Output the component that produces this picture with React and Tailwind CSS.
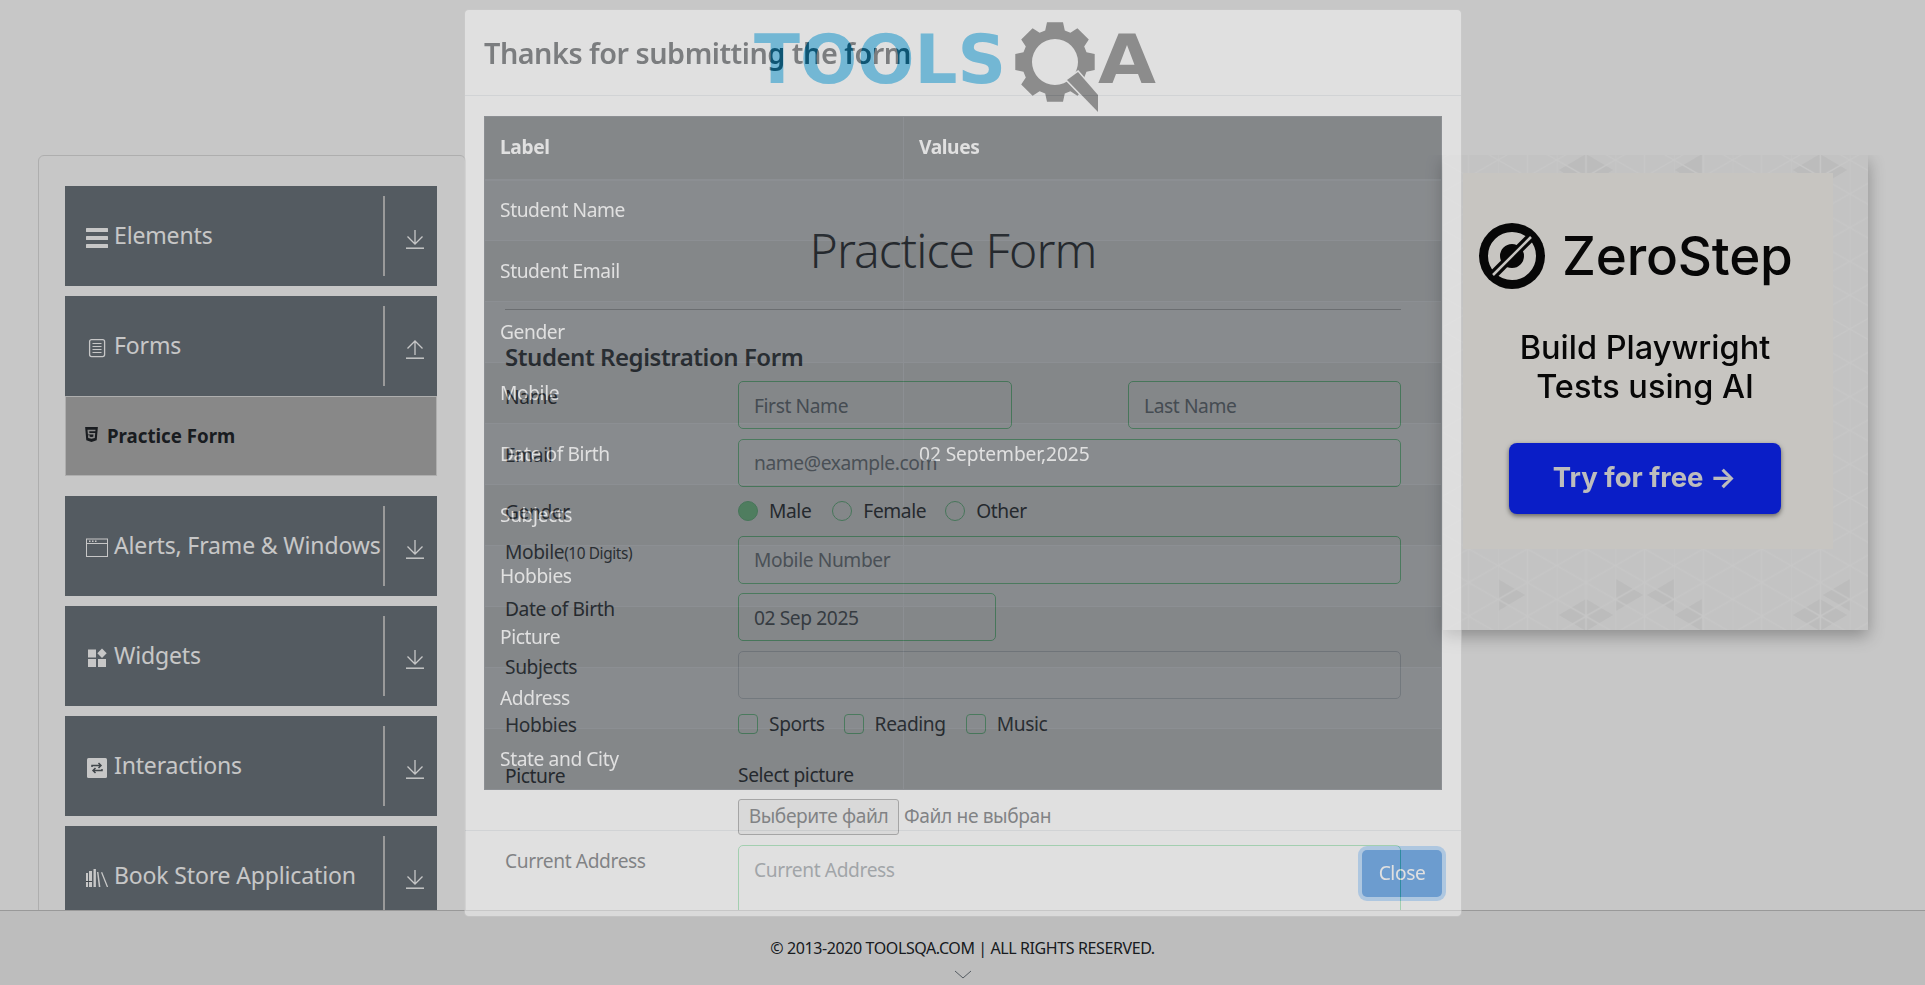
import { FaHtml5 } from "react-icons/fa";

// ---------------------------- Small drawings ----------------------------
const MenuBars = () => (
    <svg width="22" height="20" viewBox="0 0 22 20" fill="currentColor">
        <rect x="0" y="0" width="22" height="4" rx="0.5" />
        <rect x="0" y="8" width="22" height="4" rx="0.5" />
        <rect x="0" y="16" width="22" height="4" rx="0.5" />
    </svg>
);

const DocIcon = () => (
    <svg width="22" height="20" viewBox="0 0 22 20" fill="none" stroke="currentColor" strokeWidth="1.3">
        <rect x="3.6" y="1.6" width="15" height="17" rx="2" />
        <path d="M6.5 5.5h9M6.5 8.5h9M6.5 11.5h9M6.5 14.5h9" strokeWidth="1" />
    </svg>
);

const WindowIcon = () => (
    <svg width="22" height="20" viewBox="0 0 22 20" fill="none" stroke="currentColor" strokeWidth="1">
        <rect x="0.5" y="1" width="21" height="17.5" />
        <path d="M0.5 5.5h21" />
        <path d="M3 3.2h1.5M6 3.2h1.5M9 3.2h1.5" strokeWidth="1.5" />
    </svg>
);

const WidgetIcon = () => (
    <svg width="22" height="20" viewBox="0 0 22 20" fill="currentColor">
        <rect x="2" y="1.5" width="8" height="8" />
        <rect x="2" y="11" width="8" height="8" />
        <rect x="12" y="11" width="8" height="8" />
        <path d="M16 0.5l4.7 4.7-4.7 4.7-4.7-4.7z" />
    </svg>
);

const SwapIcon = () => (
    <svg width="22" height="20" viewBox="0 0 22 20">
        <rect x="1" y="0" width="20" height="20" rx="1.5" fill="currentColor" />
        <path
            d="M6 9V7.5h8.5M12.5 5l2.5 2.5-2.5 2.5M16 11v1.5H7.5M9.5 10L7 12.5 9.5 15"
            fill="none"
            stroke="#545b61"
            strokeWidth="1.5"
        />
    </svg>
);

const BooksIcon = () => (
    <svg width="22" height="20" viewBox="0 0 22 20" fill="currentColor">
        <rect x="0" y="5" width="2" height="14" />
        <rect x="3" y="3" width="3" height="16" />
        <rect x="7.5" y="1" width="2.4" height="18" />
        <path d="M11 4h1.4l2 15h-1.6zM15 4.5l1.2-.4 6 15h-1.4z" />
        <rect x="0" y="13" width="6" height="1" fill="#545b61" />
    </svg>
);

const ArrowIcon = ({ up }) => (
    <svg width="18" height="19" viewBox="0 0 18 19" fill="none" stroke="currentColor" strokeWidth="1.3">
        <path d="M0 18.2h18" strokeWidth="1.5" />
        {up ? <path d="M9 15V1M1.5 8.5L9 1l7.5 7.5" /> : <path d="M9 0v14M1.5 6.5L9 14l7.5-7.5" />}
    </svg>
);

// Gear of the logo, teeth computed around the centre
const gearPath = () => {
    const cx = 301;
    const cy = 45;
    const pts = [];
    for (let i = 0; i < 8; i++) {
        const a = (i * Math.PI) / 4 - Math.PI / 2;
        const step = 0.2;
        [
            [33, a - 0.3],
            [40.5, a - step],
            [40.5, a + step],
            [33, a + 0.3],
        ].forEach(([r, t]) => pts.push(`${(cx + r * Math.cos(t)).toFixed(1)} ${(cy + r * Math.sin(t)).toFixed(1)}`));
    }
    return `M${pts.join("L")}Z M${cx - 23} ${cy}a23 23 0 1 0 46 0a23 23 0 1 0-46 0Z`;
};

const Logo = () => (
    <svg width="404" height="100" viewBox="0 0 404 100" className="ml-[754px] mt-[17px] blur-[0.5px]">
        <text
            x="0"
            y="66"
            fontFamily="'DejaVu Sans', sans-serif"
            fontWeight="700"
            fontSize="68"
            textLength="252"
            lengthAdjust="spacingAndGlyphs"
            fill="#00a0e4"
        >
            TOOLS
        </text>
        <path d={gearPath()} fill="#3b3b3b" fillRule="evenodd" />
        <path d="M313 63L324 55L344 78L344 95Z" fill="#3b3b3b" stroke="#ffffff" strokeWidth="3" paintOrder="stroke" />
        <text
            x="344"
            y="66"
            fontFamily="'DejaVu Sans', sans-serif"
            fontWeight="700"
            fontSize="68"
            textLength="58"
            lengthAdjust="spacingAndGlyphs"
            fill="#3b3b3b"
        >
            A
        </text>
    </svg>
);

// Darker triangles of the ad's background, base x and centre y in ad coordinates
const adTriangles = [
    [143, 15, -1], [143, 15, 1], [259, 15, -1], [377, 15, -1], [377, 15, 1],
    [143, 460, -1], [143, 460, 1], [259, 460, -1], [377, 460, -1], [377, 460, 1],
    [173, 440, 1], [231, 440, -1], [55, 440, 1], [407, 440, -1],
];

const AdBackground = () => (
    <svg className="absolute inset-0" width="425" height="475">
        <defs>
            <pattern id="tri" x="-3.5" y="5" width="58.6" height="33.8" patternUnits="userSpaceOnUse">
                <path d="M0 0V33.8M29.3 0V33.8M0 0L29.3 16.9L58.6 0M0 33.8L29.3 16.9L58.6 33.8" fill="none" stroke="#ffffff" strokeWidth="1.5" />
            </pattern>
        </defs>
        <rect width="425" height="475" fill="#fafafa" />
        {adTriangles.map(([x, y, dir], i) => (
            <polygon key={i} points={`${x},${y - 16} ${x},${y + 16} ${x + dir * 27},${y}`} fill="#f1f1f1" />
        ))}
        <rect width="425" height="475" fill="url(#tri)" />
    </svg>
);

const ZeroStepMark = () => (
    <svg width="66" height="66" viewBox="0 0 66 66">
        <circle cx="33" cy="33" r="33" fill="#0a0a0a" />
        <circle cx="33" cy="33" r="18" fill="none" stroke="#fffdf8" strokeWidth="12" />
        <path d="M14 52L52 14" stroke="#0a0a0a" strokeWidth="9" />
        <path d="M14 52L52 14" stroke="#fffdf8" strokeWidth="2.5" />
    </svg>
);

// ---------------------------- Sidebar ----------------------------
const SideGroup = ({ icon, label, up, mb = "mb-[10px]" }) => (
    <div className={`flex h-[100px] items-center bg-[#6c757d] text-white ${mb}`}>
        <div className="flex min-w-0 flex-1 items-center pl-[21px]">
            <span className="mt-[4px] w-[22px] shrink-0">{icon}</span>
            <span className="mb-[2px] ml-[6px] whitespace-nowrap text-[23px] tracking-[-0.15px]">{label}</span>
        </div>
        <div className="h-[80px] w-[2px] bg-[#c6c6c6]"></div>
        <div className="flex w-[52px] justify-center pt-[7px] pl-[8px]">
            <ArrowIcon up={up} />
        </div>
    </div>
);

const Sidebar = () => (
    <div className="ml-[38px] h-[900px] w-[428px] shrink-0 rounded-md border border-[#dfdfdf] pt-[30px] pr-[28px] pl-[26px]">
        <SideGroup icon={<MenuBars />} label="Elements" />
        <SideGroup icon={<DocIcon />} label="Forms" up mb="mb-0" />
        <div className="mb-[20px] flex h-[80px] items-center border border-[#dfdfdf] bg-[#afafaf] pl-[18px] text-[#212529]">
            <FaHtml5 className="mb-[3px] h-[17px] w-[15px]" />
            <span className="ml-[8px] text-[18.7px] font-bold">Practice Form</span>
        </div>
        <SideGroup icon={<WindowIcon />} label="Alerts, Frame & Windows" />
        <SideGroup icon={<WidgetIcon />} label="Widgets" />
        <SideGroup icon={<SwapIcon />} label="Interactions" />
        <SideGroup icon={<BooksIcon />} label="Book Store Application" />
    </div>
);

// ---------------------------- Form ----------------------------
const inputCls =
    "h-[48px] rounded-[5px] border border-[#70d890] bg-transparent px-[15px] text-[19.2px] tracking-[-0.4px] text-[#495057] placeholder:text-[#6c757d]";

const FormRow = ({ label, hint, children, cls = "h-[48px] mb-[9.6px]" }) => (
    <div className={`flex items-start ${cls}`}>
        <label className="mt-[1px] w-[233px] shrink-0 whitespace-nowrap leading-[30px]">
            {label}
            {hint && <small className="text-[15.4px]">{hint}</small>}
        </label>
        {children}
    </div>
);

const Choice = ({ type, label, cls, checked }) => (
    <label className={`flex items-center ${cls}`}>
        <input
            type={type}
            defaultChecked={checked}
            className={`h-[20px] w-[20px] appearance-none border border-[#70d890] bg-transparent checked:bg-[#84e89b] ${
                type === "radio" ? "rounded-full" : "rounded-[4px]"
            }`}
        />
        <span className="ml-[11px] leading-[30px]">{label}</span>
    </label>
);

const PracticeForm = () => (
    <div className="ml-[39px] w-[896px] shrink-0 text-[19.2px] tracking-[-0.4px] text-[#212529]">
        <h1 className="mt-[66px] text-center text-[48px] font-light leading-[58px] tracking-[-0.9px]">Practice Form</h1>
        <hr className="mt-[30px] border-[#bcbcbc]" />
        <h5 className="mt-[32px] mb-[10px] text-[24px] font-semibold leading-[29px] tracking-[-0.45px]">Student Registration Form</h5>

        <FormRow label="Name">
            <input readOnly placeholder="First Name" className={`${inputCls} w-[274px]`} />
            <input readOnly placeholder="Last Name" className={`${inputCls} ml-[116px] w-[273px]`} />
        </FormRow>
        <FormRow label="Email">
            <input readOnly placeholder="name@example.com" className={`${inputCls} w-[663px]`} />
        </FormRow>
        <FormRow label="Gender" cls="h-[30px] mb-[9.6px]">
            <Choice type="radio" label="Male" checked />
            <Choice type="radio" label="Female" cls="ml-[21px]" />
            <Choice type="radio" label="Other" cls="ml-[19px]" />
        </FormRow>
        <FormRow label="Mobile" hint="(10 Digits)">
            <input readOnly placeholder="Mobile Number" className={`${inputCls} w-[663px]`} />
        </FormRow>
        <FormRow label="Date of Birth">
            <input readOnly value="02 Sep 2025" className={`${inputCls} w-[258px]`} />
        </FormRow>
        <FormRow label="Subjects">
            <div className="h-[48px] w-[663px] rounded-[5px] border border-[#ced4da]"></div>
        </FormRow>
        <FormRow label="Hobbies" cls="h-[30px] mb-[21px]">
            <Choice type="checkbox" label="Sports" />
            <Choice type="checkbox" label="Reading" cls="ml-[19px]" />
            <Choice type="checkbox" label="Music" cls="ml-[20px]" />
        </FormRow>
        <div className="mb-[10px] flex items-start">
            <label className="mt-[1px] w-[233px] shrink-0 leading-[30px]">Picture</label>
            <div>
                <div className="leading-[30px]">Select picture</div>
                <div className="mt-[9px] flex items-center">
                    <span className="flex h-[36px] w-[161px] items-center justify-center rounded-[3px] border border-[#767676] bg-[#efefef] text-[#212529]">
                        Выберите файл
                    </span>
                    <span className="ml-[5px]">Файл не выбран</span>
                </div>
            </div>
        </div>
        <FormRow label="Current Address" cls="h-[120px]">
            <textarea readOnly placeholder="Current Address" className={`${inputCls} h-[120px] w-[663px] pt-[10px]`} />
        </FormRow>
    </div>
);

// ---------------------------- Ad ----------------------------
const Ad = () => (
    <div className="relative ml-[42px] h-[475px] w-[425px] shrink-0 pt-[18px] pl-[20px] shadow-[0_6px_16px_rgba(0,0,0,0.3)]">
        <AdBackground />
        <div className="relative flex h-[376px] w-[370px] flex-col items-center bg-[#fffdf8] font-['Inter',sans-serif] text-[#0a0a0a] blur-[0.6px]">
            <div className="mt-[50px] flex items-center self-start pl-[16px]">
                <ZeroStepMark />
                <span className="ml-[17px] text-[53px] font-medium leading-[66px] tracking-[-0.2px]">ZeroStep</span>
            </div>
            <p className="mt-[39px] ml-[-6px] text-center text-[32.5px] font-medium leading-[39px]">
                Build Playwright
                <br />
                Tests using AI
            </p>
            <div className="mt-[37px] ml-[-7px] flex h-[71px] w-[272px] items-center justify-center rounded-[8px] bg-[#0d27ff] pb-[2px] text-[27.5px] font-bold text-[#f2f2f2] shadow-[0_2px_5px_rgba(0,0,0,0.5)]">
                Try for free →
            </div>
        </div>
    </div>
);

// ---------------------------- Modal ----------------------------
const resultRows = [
    ["Student Name", ""],
    ["Student Email", ""],
    ["Gender", ""],
    ["Mobile", ""],
    ["Date of Birth", "02 September,2025"],
    ["Subjects", ""],
    ["Hobbies", ""],
    ["Picture", ""],
    ["Address", ""],
    ["State and City", ""],
];

const ResultModal = () => (
    <div className="absolute top-[9px] left-[464px] flex h-[908px] w-[998px] flex-col rounded-[5px] border border-black/20 bg-white text-[#212529] opacity-45">
        <div className="flex h-[86px] shrink-0 items-center border-b border-[#dee2e6] pl-[19px]">
            <div className="text-[28.8px] font-semibold tracking-[-0.5px]">Thanks for submitting the form</div>
        </div>
        <div className="h-[734px] shrink-0 px-[19px] pt-[20px]">
            <table className="w-[958px] table-fixed border-collapse bg-[#343a40] text-[19.2px] tracking-[-0.4px] text-white">
                <thead>
                    <tr className="h-[63px] border-b-2 border-[#454d55]">
                        <th className="w-[419px] border border-[#454d55] pl-[15px] text-left font-bold">Label</th>
                        <th className="border border-[#454d55] pl-[15px] text-left font-bold">Values</th>
                    </tr>
                </thead>
                <tbody>
                    {resultRows.map(([label, value], i) => (
                        <tr key={label} className={`h-[61px] ${i % 2 === 0 ? "bg-white/5" : ""}`}>
                            <td className="border border-[#454d55] pl-[15px]">{label}</td>
                            <td className="border border-[#454d55] pl-[15px] tracking-[-0.1px]">{value}</td>
                        </tr>
                    ))}
                </tbody>
            </table>
        </div>
        <div className="flex flex-1 items-center justify-end border-t border-[#dee2e6] pr-[19px]">
            <button className="h-[47px] w-[80px] rounded-[5px] bg-[#0069d9] text-[19.2px] tracking-[-0.4px] text-white ring-4 ring-[#268fff]/50">
                Close
            </button>
        </div>
    </div>
);

// ---------------------------- Page ----------------------------
const App = () => (
    <div className="relative flex h-[985px] w-[1925px] flex-col overflow-hidden bg-white font-['Noto_Sans','Liberation_Sans',sans-serif]">
        <header className="flex h-[155px] shrink-0 items-start">
            <Logo />
        </header>
        <main className="flex h-[755px] shrink-0 items-start overflow-hidden">
            <Sidebar />
            <PracticeForm />
            <Ad />
        </main>
        <footer className="flex h-[75px] shrink-0 flex-col items-center border-t border-[#c4c4c4] bg-[#f3f3f3] text-[#212529]">
            <div className="mt-[25px] text-[16px] leading-[24px] tracking-[-0.4px]">© 2013-2020 TOOLSQA.COM | ALL RIGHTS RESERVED.</div>
            <svg width="18" height="10" viewBox="0 0 18 10" fill="none" stroke="#6c757d" strokeWidth="1" className="mt-[10px]">
                <path d="M1 1l8 7 8-7" />
            </svg>
        </footer>
        <div className="absolute inset-0 bg-black/22"></div>
        <ResultModal />
    </div>
);

export default App;
